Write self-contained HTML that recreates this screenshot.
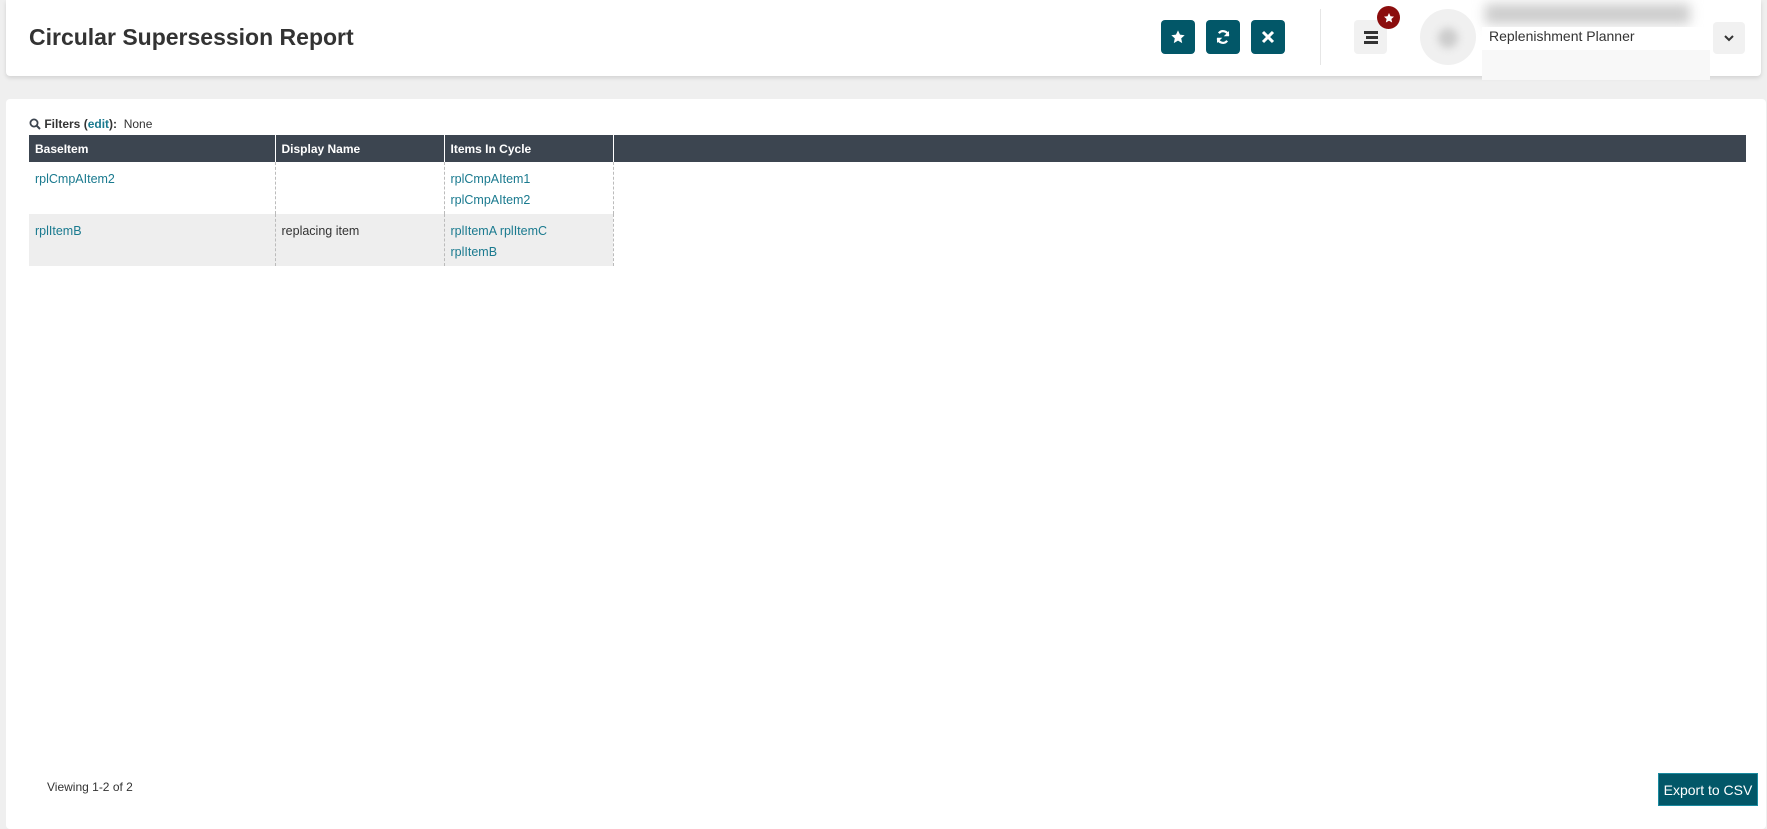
<!DOCTYPE html>
<html><head><meta charset="utf-8"><style>
*{box-sizing:border-box;margin:0;padding:0}
body{width:1767px;height:823px;background:#efefef;font-family:"Liberation Sans",sans-serif;position:relative;overflow:hidden;color:#333}
.hdr{position:absolute;left:6px;top:0;width:1755px;height:76px;background:#fff;border-radius:0 0 4px 4px;box-shadow:0 2px 4px rgba(0,0,0,.12)}
.title{position:absolute;left:23px;top:24px;font-size:23px;font-weight:bold;color:#333}
.btn{position:absolute;top:20px;width:34px;height:34px;background:#025768;border-radius:4px;display:flex;align-items:center;justify-content:center}
.card{position:absolute;left:6px;top:99px;width:1760px;height:730px;background:#fff;border-radius:4px}
.f{position:absolute;left:29px;top:117px;font-size:12px}
table{position:absolute;left:29px;top:135px;width:1717px;border-collapse:collapse;font-size:12.5px}
th{background:#3c4550;color:#fff;text-align:left;height:27px;padding:0 6px;font-size:12px;border-left:1px solid #fff}
th:first-child{border-left:none}
td{vertical-align:top;padding:7px 6px 3px;line-height:21px;border-left:1px dashed #bbb;color:#333}
td:first-child{border-left:none}
a{color:#1a7a8f;text-decoration:none}
tr.r2 td{background:#eeeeee}
</style></head><body>
<div class="hdr">
<div class="title">Circular Supersession Report</div>
</div>
<div class="btn" style="left:1161px"><svg width="16" height="16" viewBox="0 0 24 24"><path fill="#fff" d="M12 2l3 6.5 7 .8-5.2 4.8 1.5 7L12 17.5 5.7 21.1l1.5-7L2 9.3l7-.8z"/></svg></div>
<div class="btn" style="left:1206px"><svg width="18" height="18" viewBox="0 0 24 24" fill="none" stroke="#fff" stroke-width="3"><path d="M19 10a7 7 0 0 0-12.5-3M5 14a7 7 0 0 0 12.5 3"/><path fill="#fff" stroke="none" d="M20 4v7h-7zM4 20v-7h7z"/></svg></div>
<div class="btn" style="left:1251px"><svg width="14" height="14" viewBox="0 0 14 14" stroke="#fff" stroke-width="3"><path d="M2 2l10 10M12 2L2 12"/></svg></div>
<div style="position:absolute;left:1320px;top:9px;width:1px;height:56px;background:#e6e6e6"></div>
<div style="position:absolute;left:1354px;top:20px;width:33px;height:34px;background:#f1f1f1;border-radius:4px;display:flex;align-items:center;justify-content:center"><svg width="14" height="14"><rect x="0" y="1" width="14" height="3" fill="#333"/><rect x="2" y="6" width="12" height="3" fill="#333"/><rect x="0" y="11" width="14" height="3" fill="#333"/></svg></div>
<div style="position:absolute;left:1377px;top:6px;width:23px;height:23px;border-radius:50%;background:#8b0d0d;display:flex;align-items:center;justify-content:center"><svg width="12" height="12" viewBox="0 0 24 24"><path fill="#fff" d="M12 2l3 6.5 7 .8-5.2 4.8 1.5 7L12 17.5 5.7 21.1l1.5-7L2 9.3l7-.8z"/></svg></div>
<div style="position:absolute;left:1420px;top:9px;width:56px;height:56px;border-radius:50%;background:#f0f0f0"></div>
<div style="position:absolute;left:1438px;top:28px;width:20px;height:20px;border-radius:50%;background:#ccc;filter:blur(4px)"></div>
<div style="position:absolute;left:1485px;top:4px;width:205px;height:20px;background:#ccc;filter:blur(6px)"></div>
<div style="position:absolute;left:1482px;top:27px;width:228px;height:22px;background:#fff;font-size:14px;color:#333;padding:1px 7px">Replenishment Planner</div>
<div style="position:absolute;left:1482px;top:50px;width:228px;height:30px;background:#f8f8f8"></div>
<div style="position:absolute;left:1713px;top:22px;width:32px;height:32px;background:#f1f1f1;border-radius:4px;display:flex;align-items:center;justify-content:center"><svg width="10" height="8"><path d="M1 2l4 4 4-4" stroke="#333" stroke-width="2" fill="none"/></svg></div>
<div class="card"></div>
<div class="f"><svg width="12" height="12" viewBox="0 0 12 12" style="vertical-align:-2px"><circle cx="5" cy="5" r="3.6" stroke="#3c4550" stroke-width="1.8" fill="none"/><path d="M7.5 7.5L11 11" stroke="#3c4550" stroke-width="2"/></svg> <b>Filters (<a style="font-weight:bold">edit</a>):</b>&nbsp; None</div>
<table>
<tr><th style="width:246px">BaseItem</th><th style="width:169px">Display Name</th><th style="width:169px">Items In Cycle</th><th></th></tr>
<tr><td><a>rplCmpAItem2</a></td><td></td><td><a>rplCmpAItem1</a><br><a>rplCmpAItem2</a></td><td style="border-left:1px dashed #bbb;background:#fff"></td></tr>
<tr class="r2"><td><a>rplItemB</a></td><td>replacing item</td><td><a>rplItemA rplItemC</a><br><a>rplItemB</a></td><td style="background:#fff;border-left:1px dashed #bbb"></td></tr>
</table>
<div style="position:absolute;left:47px;top:780px;font-size:12px">Viewing 1-2 of 2</div>
<div style="position:absolute;left:1658px;top:773px;width:100px;height:33px;background:#025768;border:1px solid #1a8aa0;color:#fff;font-size:14px;display:flex;align-items:center;justify-content:center">Export to CSV</div>
</body></html>
